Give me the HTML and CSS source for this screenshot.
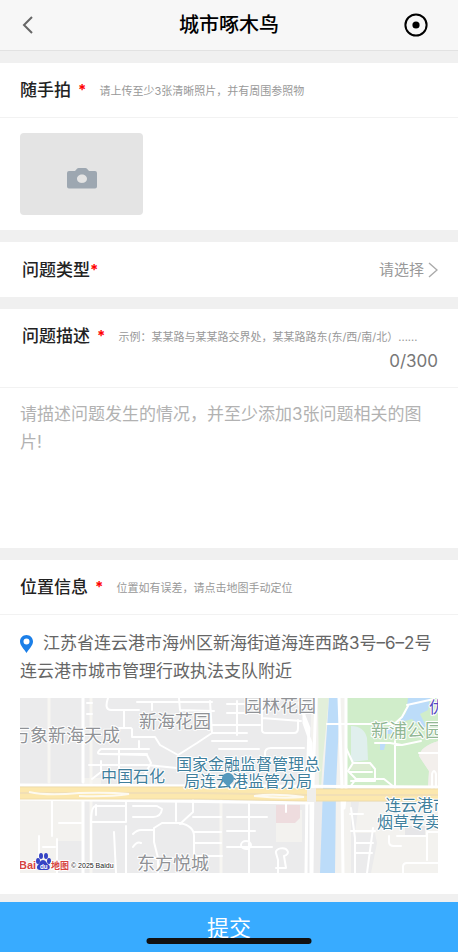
FILE: index.html
```html
<!DOCTYPE html>
<html lang="zh-CN">
<head>
<meta charset="utf-8">
<meta name="viewport" content="width=device-width, initial-scale=1">
<title>城市啄木鸟</title>
<link rel="stylesheet" href="styles.css">
</head>
<body>
<header class="navbar">
  <button class="nav-button" type="button" aria-label="返回">
    <svg width="24" height="24" viewBox="0 0 24 24" fill="none" stroke="#666" stroke-width="2"><path d="M16 4 8 12l8 8"/></svg>
  </button>
  <h1 class="navbar-title">城市啄木鸟</h1>
  <button class="nav-button nav-close" type="button" aria-label="关闭">
    <svg width="24" height="24" viewBox="0 0 24 24"><circle cx="12" cy="12" r="10.6" fill="none" stroke="#000" stroke-width="2"/><circle cx="12" cy="12" r="3.6"/></svg>
  </button>
</header>

<form class="report">
  <section class="card">
    <div class="card-head">
      <h2 class="card-title">随手拍</h2>
      <span class="required">*</span>
      <p class="hint">请上传至少3张清晰照片，并有周围参照物</p>
    </div>
    <div class="photos">
      <button class="photo-add" type="button" aria-label="添加照片">
        <svg width="30" height="21" viewBox="0 0 30 21"><path fill="#9da7b1" fill-rule="evenodd" d="M2 3h6l2-2.200Q10.500 0 11.500 0h7q1 0 1.500.8L22 3h6q2 0 2 2v13.500q0 2-2 2H2q-2 0-2-2V5q0-2 2-2ZM15 6.500c-2.800 0-5 1.900-5 4.300s2.200 4.200 5 4.200 5-1.800 5-4.200-2.200-4.300-5-4.300Z"/></svg>
      </button>
    </div>
  </section>

  <section class="card type-row">
    <label class="card-title" for="type">问题类型</label>
    <span class="required">*</span>
    <select class="type-select" id="type">
      <option>请选择</option>
    </select>
    <svg class="type-arrow" width="10" height="16" viewBox="0 0 10 16" fill="none" stroke="#aaa" stroke-width="1.400"><path d="m1 1 8 7-8 7"/></svg>
  </section>

  <section class="card">
    <div class="card-head describe-head">
      <label class="card-title" for="describe">问题描述</label>
      <span class="required">*</span>
      <p class="hint">示例：某某路与某某路交界处，某某路路东(东/西/南/北）......</p>
      <output class="counter" for="describe">0/300</output>
    </div>
    <textarea class="describe" id="describe" maxlength="300" placeholder="请描述问题发生的情况，并至少添加3张问题相关的图片!"></textarea>
  </section>

  <section class="card">
    <div class="card-head">
      <h2 class="card-title">位置信息</h2>
      <span class="required">*</span>
      <p class="hint">位置如有误差，请点击地图手动定位</p>
    </div>
    <div class="location">
      <p class="address"><svg class="address-pin" width="13" height="18" viewBox="0 0 13 18"><path fill="#1b7fe8" fill-rule="evenodd" d="M6.500 0C2.900 0 0 2.900 0 6.500 0 10.500 4 14 6.500 18 9 14 13 10.500 13 6.500 13 2.900 10.100 0 6.500 0Zm0 3.500a3 3 0 1 1 0 6 3 3 0 0 1 0-6Z"/></svg>江苏省连云港市海州区新海街道海连西路3号–6–2号连云港市城市管理行政执法支队附近</p>
      <svg class="map" viewBox="0 0 420 175" preserveAspectRatio="xMidYMid slice" role="img" aria-label="地图">
        <rect width="420" height="175" fill="#ebebec"/>
        <path fill="#f3f2ef" d="M0 101h63v42H38v32H0ZM64 80h18v8H64ZM340 104h80v71h-68l6-30-2-10h-20ZM257 112h26v32h-26ZM292 0h36v90h-36Z"/>
        <path fill="#f3f2ef" d="M312 104h20v71h-16Z"/>
        <path fill="#e2efda" d="M299 0h11l-6 60-2 30h-2Z"/>
        <path fill="#d0edca" d="M327 0h93v43q-18 5-20 15l10 15-1 17h-82Z"/>
        <path fill="#f3efec" d="M420 43q-18 5-20 15l10 15-1 17h11Z"/>
        <path fill="#ddecd3" d="M332 64h20v8h-20Z"/>
        <path fill="#e0efed" d="M332 28q13 0 16 12l1 22-17 2Z"/>
        <path fill="#bcdcf9" d="M310 0h11l-4 90-1 85h-15l3-85ZM389 0h22l-2 12-8 4 6 12-4 3-10-10-14 4 8-10ZM361 44h6l-2 8h-4Z"/>
        <path fill="#bcdcf9" d="m370 30 12-1-8 7h-8Z"/>
        <path fill="#eedcde" d="M257 107h24v13l-5 5h-19Z"/>
        <path fill="#e6e6e8" d="M386 128h20v10h-20Z"/>

        <g fill="none" stroke="#fff" stroke-linejoin="round" stroke-linecap="round">
          <path stroke="#f7f6f2" stroke-width="3" d="M30 0v84M202 100v75M72 0v175"/>
          <path stroke-width="3" d="M64 0v84M64 101v74M0 87l420 2M0 101l290 4"/>
          <path stroke-width="2" d="M68 5h5M68 16h5M89 0q-4 12 3 12h28M105 12v18M118 4h43l32 0M133 4v8M160 0l1 12 34 1M113 31v8h23l5 8 18 10 19-12 15-10-2-32M193 35h35M193 43h35M120 43v8M100 30h12M130 51h-48q-6 5 0 5l46 1 4 8-6 11M82 56h46M70 67h58l30 3M73 81l9-7V63M100 52v32"/>
          <path stroke-width="2" d="M193 27h48M208 6h29M208 15h26M243 0v32q0 3 4 3h28q4 0 4-5v-8M243 20l39 3M218 3v34M200 51h40M246 62v-7q0-5 6-5h33M240 62h44"/>
          <path stroke-width="2" d="M33 101v37M40 125h22M20 138v33M24 149h12M38 141v34M72 124h35V102M72 168v-44q0-16 5-16h30M77 107v10M107 128v47M95 134l2 41M114 119h20q8 0 9-8l-5-3M137 108h-23M157 103v20M114 136q4-4 8-4h13M114 149q4-6 8-4M120 160h17M143 125l-8 5v14l4 16v15M143 125h18q14 3 14 13v22M161 126l13-12V102M174 119h28M175 134h27M175 145h27M175 158h28"/>
          <path stroke-width="2" d="M208 119h40M208 133h28M230 106v69M208 149h45M222 147a5 4 0 1 0 10 0 5 4 0 1 0-10 0M265 158a6 4 0 1 0-8-3l2 7v13M265 158l2 12h-10M267 106v8"/>
          <path stroke-width="2" d="M308 26h65M356 45h15l12 2 19-4M376 43v47M327 50l7 15-5 8 8 8-6 8M334 65h17l5 6v12h-24M337 81l28 0 10 8M331 74h22M388 7l27-6M373 28l10-9 6-11M400 55h20M413 90V76q2-6 4 0v14M332 110l4 30v35M331 116h13M332 133h24M354 130l-6 45M336 145h18M336 155h17M370 138v6q0 4 5 4h7M378 138h30v-4h12M384 175v-6q0-4 4-4h32M408 134v28"/>
          <path stroke-width="3" d="M285 0v25l7 20v130M280 5l10 25-2 60-1 85M297 0l-3 85-1 90M320 0l3 90 1 85M327 0v90l-2 20"/>
        </g>

        <g fill="none">
          <path stroke="#f0ddab" stroke-width="13" d="M0 95h180l110 2h130"/>
          <path stroke="#fce8ae" stroke-width="11" d="M0 95h180l110 2h130"/>
          <path stroke="#f1dfb5" stroke-width="2" d="M0 95h180l110 2h130"/>
          <path stroke="#fdfaf0" stroke-width="2" d="M10 94q18 4 50 1 30-1 50 1-20 3-50 2M235 98q20-3 50 1-22 2-50-1"/>
        </g>
        <path fill="#efeeeb" d="M288 90h9v14h-9Z"/>

        <g class="map-place">
          <text x="-7" y="44">万象新海天成</text>
          <text x="120" y="30">新海花园</text>
          <text x="225" y="14">园林花园</text>
          <text x="118" y="172">东方悦城</text>
          <text class="map-park" x="352" y="39">新浦公园</text>
        </g>
        <g class="map-poi">
          <text x="82" y="84">中国石化</text>
          <text x="157" y="72">国家金融监督管理总</text>
          <text x="165" y="89">局连云港监管分局</text>
          <text x="366" y="113">连云港市</text>
          <text x="358" y="130">烟草专卖局</text>
          <text class="map-scenic" x="410" y="15">优</text>
        </g>
        <path fill="#5599bd" d="M209 75c-3.500 0-6 2.500-6 5.500 0 4 4 5 6 9 2-4 6-5 6-9 0-3-2.500-5.500-6-5.500Z"/>

        <g>
          <text class="map-bai" x="0" y="171">Bai</text>
          <g fill="#3543c4">
            <ellipse cx="19" cy="163" rx="2" ry="3"/>
            <ellipse cx="22" cy="158" rx="2" ry="3"/>
            <ellipse cx="27" cy="158" rx="2" ry="3"/>
            <ellipse cx="30" cy="163" rx="2" ry="3"/>
            <path d="M24 162c3 0 3 3 6 5 2 3 0 5-3 5h-6c-3 0-4-3-2-5 2-2 2-5 5-5Z"/>
          </g>
          <text class="map-du" x="21" y="171">du</text>
          <text class="map-ditu" x="32" y="171">地图</text>
          <text class="map-copyright" x="52" y="170">© 2025 Baidu</text>
        </g>
      </svg>
    </div>
  </section>

  <button class="submit" type="submit">提交</button>
</form>
<div class="home-indicator"></div>
</body>
</html>
```
FILE: styles.css
```css
* {
  box-sizing: border-box;
}

body {
  margin: 0;
  min-height: 100vh;
  background: #f0f0f0;
  color: #222;
  font-family: Inter, "Noto Sans CJK SC", sans-serif;
  font-size: 17px;
}

h1, h2, p {
  margin: 0;
}

button, select, textarea {
  padding: 0;
  border: 0;
  border-radius: 0;
  background: none;
  font: inherit;
}

svg {
  display: block;
}

.navbar {
  display: grid;
  grid-template-columns: 1fr auto 1fr;
  align-items: center;
  height: 51px;
  border-bottom: 1px solid #e2e2e2;
  background: #f7f7f7;
}

.nav-button {
  justify-self: start;
  margin: 0 30px 0 16px;
}

.nav-close {
  justify-self: end;
}

.navbar-title {
  color: #000;
  font-size: 20px;
  font-weight: 500;
  line-height: 28px;
}

.report {
  display: flex;
  flex-direction: column;
  gap: 12px;
  padding-top: 12px;
}

.card {
  background: #fff;
}

.card-head {
  display: flex;
  align-items: center;
  min-height: 55px;
  padding: 0 20px;
  border-bottom: 1px solid #f2f2f2;
}

.card-title {
  font-size: 17px;
  font-weight: 500;
  line-height: 26px;
  white-space: nowrap;
}

.required {
  color: #f00;
  font-size: 15px;
  font-weight: 700;
  line-height: 22px;
}

.card-head .required {
  margin: 0 13px 0 7px;
}

.hint {
  padding-top: 2px;
  color: #999;
  font-size: 11px;
  line-height: 18px;
}

.photos {
  padding: 15px 20px;
}

.photo-add {
  display: flex;
  align-items: center;
  justify-content: center;
  width: 123px;
  height: 82px;
  padding-top: 8px;
  border-radius: 4px;
  background: #e4e4e4;
}

.type-row {
  display: flex;
  align-items: center;
  min-height: 55px;
  padding: 0 20px 0 22px;
}

.type-select {
  flex: 1;
  appearance: none;
  color: #999;
  font-size: 15px;
  line-height: 22px;
  text-align-last: right;
}

.type-arrow {
  margin-left: 4px;
}

.describe-head {
  flex-wrap: wrap;
  padding: 14px 20px 14px 22px;
}

.counter {
  flex-basis: 100%;
  color: #777;
  line-height: 24px;
  text-align: right;
}

.describe {
  display: block;
  width: 100%;
  height: 160px;
  padding: 12px 20px;
  color: #222;
  line-height: 28px;
  resize: none;
}

.describe::placeholder {
  color: #b2b2b2;
}

.location {
  padding: 14px 20px 21px;
}

.address {
  margin-bottom: 13px;
  color: #666;
  line-height: 28px;
}

.address-pin {
  display: inline-block;
  margin-right: 10px;
  vertical-align: -4px;
}

.map {
  width: 100%;
  height: 175px;
}

.map text {
  stroke: #fff;
  stroke-width: 2px;
  stroke-linejoin: round;
  paint-order: stroke;
}

.map-place {
  fill: #909296;
  font-size: 18px;
}

.map-poi {
  fill: #3f7f9d;
  font-size: 16px;
}

.map-place .map-park {
  fill: #91b794;
}

.map-poi .map-scenic {
  fill: #5548c0;
}

.map .map-bai {
  fill: #d6453f;
  font-family: "Liberation Sans", sans-serif;
  font-size: 11px;
  font-weight: 700;
}

.map .map-du {
  fill: #fff;
  stroke: none;
  font-size: 6px;
  font-weight: 700;
}

.map .map-ditu {
  fill: #d6453f;
  font-size: 9px;
  font-weight: 700;
}

.map .map-copyright {
  fill: #222;
  font-family: "Liberation Sans", sans-serif;
  font-size: 7px;
}

.submit {
  height: 50px;
  margin-top: -4px;
  padding-top: 2px;
  background: #38abff;
  color: #fff;
  font-size: 22px;
  line-height: 32px;
}

.home-indicator {
  position: fixed;
  bottom: 8px;
  left: 50%;
  width: 165px;
  height: 6px;
  border-radius: 3px;
  background: #111;
  transform: translateX(-50%);
}
```
